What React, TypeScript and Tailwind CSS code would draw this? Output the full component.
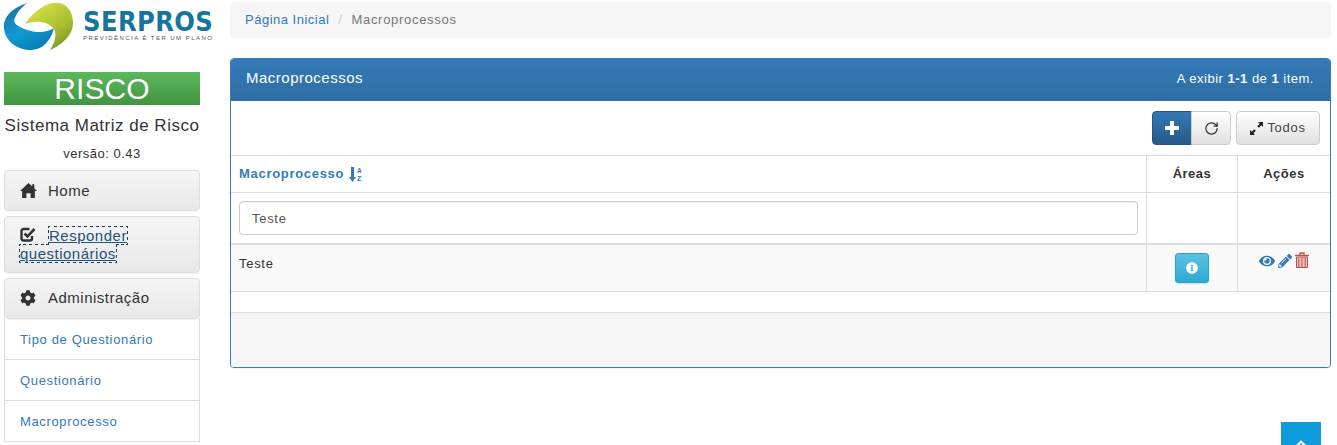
import React from "react";
import { FaCog, FaInfoCircle, FaEye, FaPencilAlt, FaChevronUp } from "react-icons/fa";
import { RotateCw } from "lucide-react";

function Logo() {
  return (
    <div className="relative h-[54px] w-[212px] shrink-0">
      <svg width="80" height="54" viewBox="0 0 80 54" className="absolute left-0 top-0">
        <defs>
          <linearGradient id="b" x1="0" y1="0" x2="0.6" y2="1">
            <stop offset="0" stopColor="#1b6f9c" />
            <stop offset="0.6" stopColor="#0f9ad6" />
            <stop offset="1" stopColor="#0a7fb5" />
          </linearGradient>
          <linearGradient id="g" x1="0.2" y1="0" x2="0.9" y2="1">
            <stop offset="0" stopColor="#d8e24a" />
            <stop offset="0.6" stopColor="#a9bd2e" />
            <stop offset="1" stopColor="#70872a" />
          </linearGradient>
        </defs>
        <path d="M27 3C13 8 3 16 4 28C5 42 18 50 31 50C43 50 51 40 54 28C47 33 36 33 27 30C18 27 12 23 15 18C17 12 22 7 27 3Z" fill="url(#b)" />
        <path d="M25 24C31 15 41 5 53 3C65 1 73 10 73 23C73 35 62 45 50 50C55 42 57 35 54 29C48 21 36 20 25 24Z" fill="url(#g)" />
      </svg>
      <div className="absolute left-[83px] top-[8px] font-['DejaVu_Sans'] text-[27px] font-bold leading-[28px] tracking-[0.4px] text-[#14769f] [font-stretch:condensed]">SERPROS</div>
      <div className="absolute left-[83px] top-[34px] whitespace-nowrap font-['Liberation_Sans'] text-[6px] leading-[8px] tracking-[1.45px] text-[#555]">PREVIDÊNCIA É TER UM PLANO</div>
    </div>
  );
}

function SideButton({ children }: { children: React.ReactNode }) {
  return (
    <div className="rounded-[4px] border border-[#ddd] bg-gradient-to-b from-[#f5f5f5] to-[#e8e8e8] px-[15px] py-[10px] text-[15px] leading-[17.6px] text-[#333] shadow-[0_1px_1px_rgba(0,0,0,0.05)]">
      {children}
    </div>
  );
}

function SubItem({ label }: { label: string }) {
  return <div className="flex h-[41px] items-center border-b border-[#ddd] px-[15px] pt-[2px] text-[13px] tracking-[0.65px] text-[#337ab7]">{label}</div>;
}

function Sidebar() {
  return (
    <aside className="flex w-[230px] shrink-0 flex-col">
      <Logo />
      <div className="mx-[4px] mt-[18px] w-[196px]">
        <div className="h-[33px] bg-gradient-to-b from-[#5cb85c] to-[#419641] text-center text-[30px] leading-[33px] tracking-[0.1px] text-white">RISCO</div>
        <div className="mt-[10px] whitespace-nowrap text-center text-[17px] leading-[22px] tracking-[0.5px] text-[#333]">Sistema Matriz de Risco</div>
        <div className="mt-[8px] text-center text-[13px] leading-[18px] text-[#333]">versão: 0.43</div>
        <div className="mt-[7px] flex flex-col gap-[5px]">
          <SideButton>
            <span className="flex h-[19px] items-center">
              <svg width="17" height="15" viewBox="0 0 16 14" className="mr-[11px] fill-[#333]"><path d="M8 0L0 7.5h2V14h4V9.5h4V14h4V7.5h2L13.5 5V1h-2v2Z" /></svg>
              Home
            </span>
          </SideButton>
          <SideButton>
            <span className="block h-[35px] leading-[18px]">
              <svg width="16" height="15" viewBox="0 0 16 15" className="mr-[13px] inline align-[-1px]">
                <path d="M12 9v2.5a2 2 0 0 1-2 2H3.500a2 2 0 0 1-2-2V4a2 2 0 0 1 2-2h6" fill="none" stroke="#333" strokeWidth="2.400" />
                <path d="M4.500 6.500l3 3 7-7.500" fill="none" stroke="#333" strokeWidth="2.600" />
              </svg>
              <a className="text-[#23527c] underline outline-1 outline-dotted outline-[#1d3d5c]">Responder questionários</a>
            </span>
          </SideButton>
          <div>
            <SideButton>
              <span className="flex h-[19px] -translate-y-px items-center"><FaCog className="mr-[12px] text-[16px] text-[#333]" />Administração</span>
            </SideButton>
            <div className="-mt-[1px] border-x border-[#ddd] pt-px">
              <SubItem label="Tipo de Questionário" />
              <SubItem label="Questionário" />
              <SubItem label="Macroprocesso" />
            </div>
          </div>
        </div>
      </div>
    </aside>
  );
}

function Panel() {
  return (
    <section className="mt-[20px] rounded-[4px] border border-[#337ab7] bg-white shadow-[0_1px_1px_rgba(0,0,0,0.05)]">
      <div className="flex h-[42px] items-center justify-between rounded-t-[3px] bg-gradient-to-b from-[#337ab7] to-[#2e6da4] pb-[4px] pl-[15px] pr-[16px] text-white">
        <span className="text-[15px] tracking-[0.5px]">Macroprocessos</span>
        <span className="pt-[2px] text-[13px]">A exibir <b>1-1</b> de <b>1</b> item.</span>
      </div>
      <div className="flex h-[54px] items-center justify-end gap-[5px] pr-[10px]">
        <div className="flex h-[34px]">
          <div className="flex w-[40px] items-center justify-center rounded-l-[4px] border border-[#245580] bg-gradient-to-b from-[#337ab7] to-[#265a88] text-white">
            <svg width="14" height="14" viewBox="0 0 14 14" className="fill-white"><path d="M5 0h4v5h5v4H9v5H5V9H0V5h5Z" /></svg>
          </div>
          <div className="-ml-px flex w-[40px] items-center justify-center rounded-r-[4px] border border-[#ccc] bg-gradient-to-b from-white to-[#e0e0e0] text-[#333]"><RotateCw size={15} strokeWidth={2} /></div>
        </div>
        <div className="flex h-[34px] w-[84px] items-center justify-center gap-[4px] rounded-[4px] border border-[#ccc] bg-gradient-to-b from-white to-[#e0e0e0] text-[13px] tracking-[0.7px] text-[#444]">
          <svg width="13" height="13" viewBox="0 0 13 13" className="fill-[#222]"><path d="M8 0h5v5l-1.700-1.700L8.800 5.800 7.200 4.200 9.700 1.700ZM5 13H0V8l1.700 1.700 2.500-2.500 1.600 1.600-2.500 2.500Z" /></svg>
          Todos
        </div>
      </div>
      <div className="grid grid-cols-[1fr_91px_93px] border-t border-[#ddd] text-[13px] tracking-[0.7px] text-[#333]">
        <div className="flex h-[36px] items-center gap-[5px] px-[8px] font-bold text-[#337ab7]">
          Macroprocesso
          <svg width="13" height="15" viewBox="0 0 13 15" className="fill-[#337ab7]">
            <path d="M2 0h3v10h2l-3.500 5L0 10h2Z" />
            <text x="8" y="5.500" fontSize="6.500" fontWeight="700" fontFamily="Liberation Sans" letterSpacing="0">A</text>
            <text x="8" y="14" fontSize="7" fontWeight="700" fontFamily="Liberation Sans" letterSpacing="0">Z</text>
          </svg>
        </div>
        <div className="flex h-[36px] items-center justify-center border-l border-[#ddd] font-bold tracking-[0.5px]">Áreas</div>
        <div className="flex h-[36px] items-center justify-center border-l border-[#ddd] font-bold tracking-[0.5px]">Ações</div>

        <div className="flex h-[51px] items-center border-t border-[#ddd] px-[8px]">
          <div className="flex h-[34px] w-full items-center rounded-[4px] border border-[#ccc] px-[12px] pt-px text-[#555] shadow-[inset_0_1px_1px_rgba(0,0,0,0.075)]">Teste</div>
        </div>
        <div className="h-[51px] border-l border-t border-[#ddd]" />
        <div className="h-[51px] border-l border-t border-[#ddd]" />

        <div className="h-[48px] border-t-2 border-[#ddd] bg-[#f9f9f9] px-[8px] pt-[9px]">Teste</div>
        <div className="flex h-[48px] justify-center border-l border-t-2 border-[#ddd] bg-[#f9f9f9] pt-[8px]">
          <div className="flex h-[30px] w-[34px] items-center justify-center rounded-[3px] border border-[#28a4c9] bg-gradient-to-b from-[#5bc0de] to-[#2aabd2] text-white shadow-[0_1px_2px_rgba(0,0,0,0.15)]"><FaInfoCircle className="text-[12px]" /></div>
        </div>
        <div className="flex h-[48px] justify-center gap-[3px] border-l border-t-2 border-[#ddd] bg-[#f9f9f9] pr-[1px] pt-[8px] text-[#337ab7]">
          <FaEye className="text-[16px]" />
          <FaPencilAlt className="mt-px text-[14px]" />
          <svg width="14" height="16" viewBox="0 0 14 16" className="-mt-[1px]">
            <path d="M0 3.500h14M5 3V1h4v2" fill="none" stroke="#b9504d" strokeWidth="1.300" />
            <path d="M1.500 5h11v11h-11Z" fill="#e6c4c3" />
            <path d="M3.800 6v9M7 6v9M10.200 6v9" stroke="#b9504d" strokeWidth="1" />
            <path d="M1.500 5h11v10.500h-11Z" fill="none" stroke="#b9504d" strokeWidth="1" />
          </svg>
        </div>

        <div className="col-span-3 h-[21px] border-t border-[#ddd]" />
      </div>
      <div className="h-[55px] rounded-b-[3px] border-t border-[#ddd] bg-[#f5f5f5]" />
    </section>
  );
}

export default function App() {
  return (
    <div className="relative flex h-[445px] w-[1337px] overflow-hidden bg-white font-['Liberation_Sans',sans-serif] text-[13px] tracking-[0.5px]">
      <Sidebar />
      <main className="w-[1101px] shrink-0 pt-[2px]">
        <nav className="flex h-[36px] items-center rounded-[4px] bg-[#f5f5f5] px-[15px]">
          <a className="text-[#337ab7]">Página Inicial</a>
          <span className="px-[9px] text-[#ccc]">/</span>
          <span className="tracking-[0.7px] text-[#777]">Macroprocessos</span>
        </nav>
        <Panel />
      </main>
      <div className="absolute left-[1281px] top-[422px] flex h-[40px] w-[40px] justify-center bg-[#0d9bdc] pt-[15px] text-white"><FaChevronUp className="text-[14px]" /></div>
    </div>
  );
}
